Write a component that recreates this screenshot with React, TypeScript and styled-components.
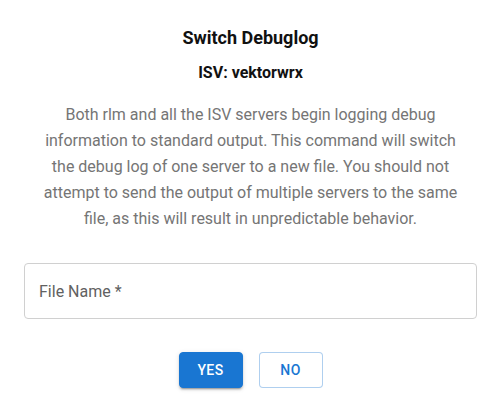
import React from "react";
import styled, { createGlobalStyle } from "styled-components";

const GlobalStyle = createGlobalStyle`
  html, body {
    margin: 0;
    padding: 0;
    background: #fff;
    font-family: Roboto, "Liberation Sans", sans-serif;
  }
`;

const App = () => {
  return (
    <>
      <GlobalStyle />
      <Dialog>
        <Title>Switch Debuglog</Title>
        <Subtitle>ISV: vektorwrx</Subtitle>
        <Description>
          Both rlm and all the ISV servers begin logging debug information to
          standard output. This command will switch the debug log of one server
          to a new file. You should not attempt to send the output of multiple
          servers to the same file, as this will result in unpredictable
          behavior.
        </Description>
        <Field>
          <FieldLabel>File Name *</FieldLabel>
        </Field>
        <Actions>
          <Button $primary>YES</Button>
          <Button>NO</Button>
        </Actions>
      </Dialog>
    </>
  );
};

const Dialog = styled.div`
  width: 500px;
  height: 408px;
  box-sizing: border-box;
  padding: 24px 23px 0 24px;
  display: flex;
  flex-direction: column;
  align-items: stretch;
  background: #fff;
  border-radius: 4px;
`;

const Title = styled.h2`
  margin: 0;
  font-size: 18px;
  line-height: 28px;
  font-weight: 700;
  color: #111;
  text-align: center;
`;

const Subtitle = styled.h3`
  margin: 9px 0 0;
  font-size: 16px;
  line-height: 24px;
  font-weight: 700;
  color: #111;
  text-align: center;
`;

const Description = styled.p`
  margin: 17px 0 0;
  padding: 0 12px;
  font-size: 16px;
  line-height: 26px;
  color: #757575;
  text-align: center;
`;

const Field = styled.div`
  margin-top: 31px;
  height: 56px;
  box-sizing: border-box;
  border: 1px solid #d0d0d0;
  border-radius: 4px;
  display: flex;
  align-items: center;
  padding: 0 14px;
`;

const FieldLabel = styled.span`
  font-size: 16px;
  color: #616161;
`;

const Actions = styled.div`
  margin-top: 33px;
  display: flex;
  justify-content: center;
  gap: 16px;
`;

const Button = styled.button<{ $primary?: boolean }>`
  width: 64px;
  height: 36px;
  box-sizing: border-box;
  border-radius: 4px;
  font-family: Roboto, "Liberation Sans", sans-serif;
  font-size: 14px;
  font-weight: 500;
  letter-spacing: 0.4px;
  cursor: pointer;
  border: 1px solid ${(p) => (p.$primary ? "#1976d2" : "rgba(25, 118, 210, 0.35)")};
  background: ${(p) => (p.$primary ? "#1976d2" : "#fff")};
  color: ${(p) => (p.$primary ? "#fff" : "#1976d2")};
  box-shadow: ${(p) =>
    p.$primary
      ? "0 3px 1px -2px rgba(0,0,0,0.2), 0 2px 2px 0 rgba(0,0,0,0.14), 0 1px 5px 0 rgba(0,0,0,0.12)"
      : "none"};
`;

export default App;
